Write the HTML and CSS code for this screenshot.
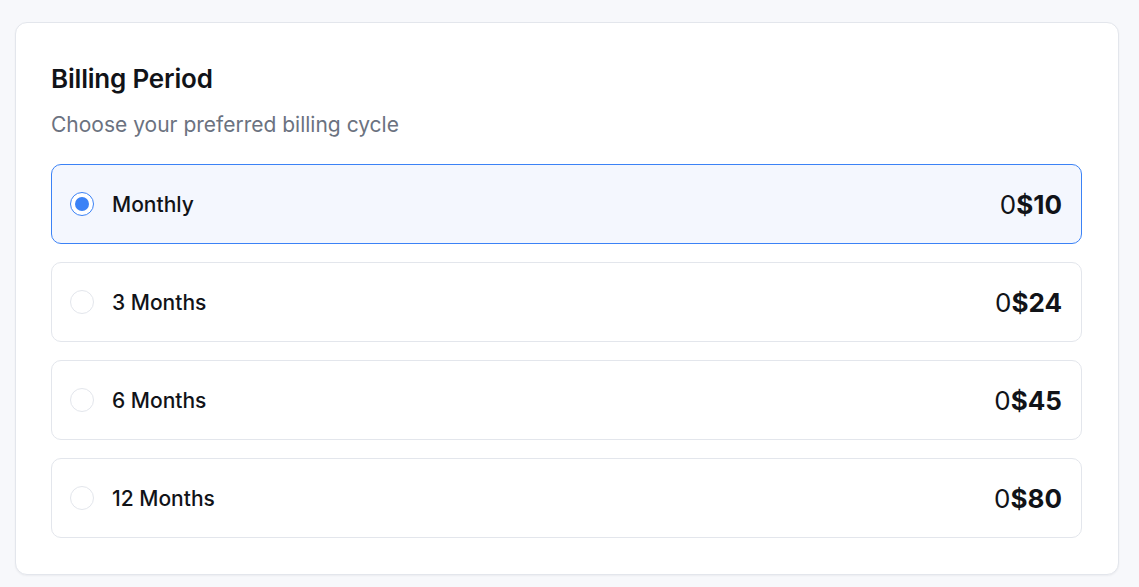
FILE: index.html
```html
<!DOCTYPE html>
<html lang="en">
<head>
<meta charset="utf-8">
<title>Billing Period</title>
<link rel="stylesheet" href="styles.css">
</head>
<body>
<div class="card">
  <h2 class="title">Billing Period</h2>
  <p class="subtitle">Choose your preferred billing cycle</p>
  <div class="options">
    <label class="option selected">
      <span class="radio checked"></span>
      <span class="label">Monthly</span>
      <span class="price">0<b>$10</b></span>
    </label>
    <label class="option">
      <span class="radio"></span>
      <span class="label">3 Months</span>
      <span class="price">0<b>$24</b></span>
    </label>
    <label class="option">
      <span class="radio"></span>
      <span class="label">6 Months</span>
      <span class="price">0<b>$45</b></span>
    </label>
    <label class="option">
      <span class="radio"></span>
      <span class="label">12 Months</span>
      <span class="price">0<b>$80</b></span>
    </label>
  </div>
</div>
</body>
</html>
```

FILE: styles.css
```css
html, body {
  margin: 0;
  padding: 0;
}
body {
  background: #f7f8fb;
  font-family: Inter, "Noto Sans", sans-serif;
  color: #111827;
  padding: 22px 20px 12px 15px;
}
.card {
  background: #ffffff;
  border: 1px solid #e3e6ec;
  border-radius: 12px;
  box-shadow: 0 1px 2px rgba(16, 24, 40, 0.05);
  padding: 36px 36px 36px 35px;
}
.title {
  margin: 0;
  font-size: 26px;
  line-height: 39px;
  font-weight: 600;
  color: #111318;
  letter-spacing: -0.2px;
}
.subtitle {
  margin: 11px 0 0 0;
  font-size: 21px;
  line-height: 31px;
  color: #6b7280;
}
.options {
  margin-top: 24px;
  display: flex;
  flex-direction: column;
  gap: 18px;
}
.option {
  display: flex;
  align-items: center;
  height: 80px;
  box-sizing: border-box;
  border: 1px solid #e3e6ec;
  border-radius: 10px;
  padding: 0 19px 0 18px;
  background: #ffffff;
}
.option.selected {
  border-color: #3b82f6;
  background: #f4f7fe;
}
.radio {
  width: 24px;
  height: 24px;
  box-sizing: border-box;
  border-radius: 50%;
  border: 1.5px solid #e3e6ec;
  background: #ffffff;
  flex: none;
  position: relative;
}
.radio.checked {
  border: 1.5px solid #3b82f6;
}
.radio.checked::after {
  content: "";
  position: absolute;
  left: 50%;
  top: 50%;
  width: 14px;
  height: 14px;
  margin: -7px 0 0 -7px;
  border-radius: 50%;
  background: #3b82f6;
}
.label {
  margin-left: 18px;
  font-size: 21px;
  font-weight: 500;
  color: #111318;
}
.price {
  margin-left: auto;
  font-size: 26px;
  font-weight: 400;
  color: #111318;
}
.price b {
  font-weight: 700;
}
```
